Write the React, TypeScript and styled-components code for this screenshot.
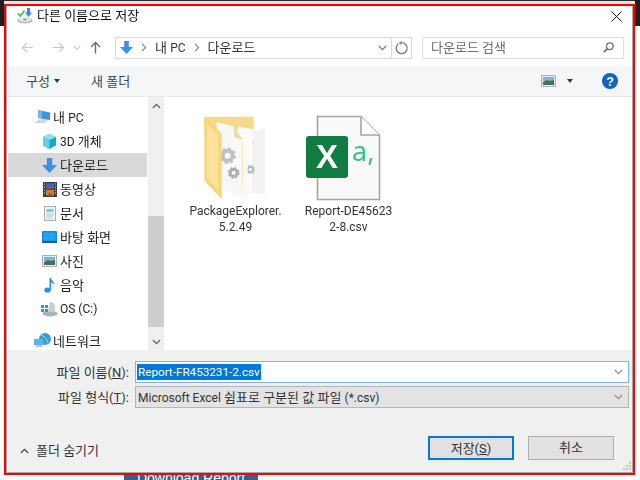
import React from 'react';
import styled, { createGlobalStyle } from 'styled-components';

const GlobalStyle = createGlobalStyle`
  html, body { margin: 0; padding: 0; background: #fff; }
  * { box-sizing: border-box; }
`;

const FONT = `Roboto, "Noto Sans CJK KR", sans-serif`;

const Page = styled.div`
  position: relative;
  width: 640px;
  height: 480px;
  padding: 4px 5px 5px 4px;
  overflow: hidden;
  background: #fff;
  font-family: ${FONT};
  font-size: 13px;
  color: #222;
`;

const BackTop = styled.div`
  position: absolute;
  left: 0;
  right: 0;
  top: 0;
  height: 4px;
  background: linear-gradient(#2a2a2a 0 1px, #e4e4e4 1px);
`;

const BackSide = styled.div<{ $right?: boolean }>`
  position: absolute;
  top: 0;
  height: 26px;
  width: ${(p) => (p.$right ? 5 : 4)}px;
  background: #1f1f1f;
  ${(p) => (p.$right ? 'right: 0;' : 'left: 0;')}
`;

const BackButton = styled.div`
  position: absolute;
  left: 124px;
  top: 466px;
  width: 134px;
  height: 24px;
  background: #2f6196;
  color: #fff;
  font-family: "Liberation Sans", sans-serif;
  font-size: 14px;
  line-height: 24px;
  text-align: center;
`;

const Dialog = styled.div`
  position: relative;
  z-index: 1;
  display: flex;
  flex-direction: column;
  width: 631px;
  height: 471px;
  border: 2px solid #f00;
  background: #fff;
`;

const Inner = styled.div`
  display: flex;
  flex-direction: column;
  height: 100%;
  border: solid #a9a9a9;
  border-width: 0 1px 1px 1px;
  filter: blur(0.4px);
`;

const TitleBar = styled.div`
  display: flex;
  align-items: center;
  height: 27px;
  padding: 0 10px 7px 10px;
  gap: 4px;
  color: #111;
`;

const TitleText = styled.span`
  flex: 1;
  line-height: 16px;
`;

const Text = styled.span`
  margin-bottom: 2px;
`;

const Latin = styled.span`
  font-size: 12px;
`;

const NavBar = styled.div`
  display: flex;
  align-items: center;
  height: 33px;
  padding: 0 8px 4px 14px;
`;

const NavArrows = styled.div`
  display: flex;
  align-items: center;
  width: 94px;
`;

const NavSlot = styled.span<{ $w: number; $end?: boolean }>`
  display: flex;
  justify-content: ${(p) => (p.$end ? 'flex-end' : 'center')};
  width: ${(p) => p.$w}px;
`;

const AddressBox = styled.div`
  display: flex;
  align-items: center;
  width: 297px;
  height: 22px;
  border: 1px solid #d9d9d9;
  color: #333;
`;

const Crumbs = styled.div`
  flex: 1;
  display: flex;
  align-items: center;
  gap: 8px;
  padding-left: 4px;
`;

const AddressEnd = styled.span<{ $w: number; $line?: boolean }>`
  display: flex;
  align-items: center;
  justify-content: center;
  width: ${(p) => p.$w}px;
  height: 100%;
  ${(p) => p.$line && 'border-left: 1px solid #d9d9d9;'}
`;

const SearchBox = styled.div`
  display: flex;
  align-items: center;
  justify-content: space-between;
  width: 202px;
  height: 22px;
  margin-left: 10px;
  padding: 0 9px 0 8px;
  border: 1px solid #dedede;
  color: #6d6d6d;
`;

const ToolBar = styled.div`
  display: flex;
  align-items: center;
  height: 31px;
  padding: 0 14px 0 19px;
  background: #f5f6f7;
  border-bottom: 1px solid #e7e8ea;
  color: #3b4756;
`;

const ToolItem = styled.span<{ $w: number }>`
  display: flex;
  align-items: center;
  gap: 4px;
  width: ${(p) => p.$w}px;
`;

const ToolRight = styled.div`
  margin-left: auto;
  display: flex;
  align-items: center;
`;

const Caret = styled.i`
  display: block;
  width: 0;
  height: 0;
  border: 3.5px solid transparent;
  border-top: 4px solid #2b3a4d;
  border-bottom: 0;
`;

const Main = styled.div`
  flex: 1;
  display: flex;
  min-height: 0;
  overflow: hidden;
`;

const Sidebar = styled.div`
  width: 141px;
  padding-top: 8px;
`;

const TreeRow = styled.div<{ $indent: number; $selected?: boolean; $gapTop?: boolean }>`
  display: flex;
  align-items: center;
  gap: 2px;
  height: 24px;
  margin: ${(p) => (p.$gapTop ? '8px' : '0')} 1px 0;
  padding-left: ${(p) => p.$indent}px;
  background: ${(p) => (p.$selected ? '#d9d9d9' : 'transparent')};
  color: #222;
`;

const IconSlot = styled.span`
  display: flex;
  align-items: center;
  justify-content: center;
  width: 17px;
  height: 17px;
`;

const ScrollBar = styled.div`
  display: flex;
  flex-direction: column;
  width: 16px;
  background: #f0f0f0;
`;

const ScrollBtn = styled.div`
  display: flex;
  align-items: center;
  justify-content: center;
  height: 17px;
`;

const ScrollSpace = styled.div<{ $h: number }>`
  height: ${(p) => p.$h}px;
`;

const ScrollThumb = styled.div`
  height: 111px;
  background: #cdcdcd;
`;

const FileArea = styled.div`
  flex: 1;
  display: flex;
  align-items: flex-start;
  padding: 15px 0 0 15px;
`;

const FileItem = styled.div`
  display: flex;
  flex-direction: column;
  align-items: center;
  width: 113px;
`;

const FileThumb = styled.div<{ $shift?: number }>`
  display: flex;
  align-items: center;
  justify-content: center;
  height: 91px;
  padding-right: ${(p) => p.$shift ?? 0}px;
`;

const FileName = styled.div`
  font-size: 12px;
  line-height: 16px;
  text-align: center;
  color: #333;
`;

const Bottom = styled.div`
  position: relative;
  height: 122px;
  padding: 11px 3px 0 0;
  background: #f0f0f0;
`;

const FieldRow = styled.div`
  display: flex;
  align-items: center;
  height: 22px;
  margin-bottom: 3px;
`;

const FieldLabel = styled.label`
  width: 122px;
  margin: 0 6px 2px 0;
  text-align: right;
  color: #333;
`;

const FileInput = styled.div`
  flex: 1;
  display: flex;
  align-items: center;
  justify-content: space-between;
  height: 22px;
  padding: 0 5px 0 1px;
  border: 1px solid #7db7ea;
  background: #fff;
`;

const Selected = styled.span`
  background: #0078d7;
  color: #fff;
  font-size: 11.7px;
  line-height: 16px;
  padding: 0 1px;
`;

const TypeSelect = styled(FileInput)`
  padding-left: 2px;
  border-color: #b5b5b5;
  background: #e3e3e3;
  color: #333;
`;

const Footer = styled.div`
  display: flex;
  align-items: center;
  margin-top: 26px;
  padding: 0 15px 0 13px;
`;

const HideFolders = styled.div`
  display: flex;
  align-items: center;
  gap: 7px;
  margin-top: 6px;
  margin-right: auto;
  color: #333;
`;

const DlgButton = styled.button<{ $primary?: boolean }>`
  width: 86px;
  height: 24px;
  margin-left: 14px;
  padding: 0 0 2px;
  border: ${(p) => (p.$primary ? '2px solid #0078d7' : '1px solid #adadad')};
  background: #e1e1e1;
  font: inherit;
  color: #333;
`;

const Grip = styled.svg`
  position: absolute;
  right: 0;
  bottom: 0;
`;

const Chevron = ({ up, color = '#777', w = 10 }: { up?: boolean; color?: string; w?: number }) => (
  <svg width={w} height="6" viewBox="0 0 10 6">
    <path d={up ? 'M1 5.2 5 1.2 9 5.2' : 'M1 .8 5 4.8 9 .8'} fill="none" stroke={color} strokeWidth="1.3" />
  </svg>
);

const Arrow = ({ color, dir }: { color: string; dir: 'left' | 'right' | 'up' }) => (
  <svg width="13" height="13" viewBox="0 0 13 13" fill="none" stroke={color} strokeWidth="1.2">
    {dir === 'left' && <path d="M12 6.5H1.5M6 2 1.5 6.5 6 11" />}
    {dir === 'right' && <path d="M1 6.5h10.5M7 2l4.5 4.5L7 11" />}
    {dir === 'up' && <path d="M6.5 12.5V1.5M2 6l4.5-4.5L11 6" strokeWidth="1.4" />}
  </svg>
);

const DownloadIcon = ({ size = 14 }: { size?: number }) => (
  <svg width={size} height={size} viewBox="0 0 14 14">
    <path d="M4.5 0h5v6.5H14L7 14 0 6.5h4.5z" fill="#3f8fe3" />
  </svg>
);

const Crumb = () => (
  <svg width="6" height="9" viewBox="0 0 6 9">
    <path d="M1 .8 4.6 4.5 1 8.2" fill="none" stroke="#888" strokeWidth="1.2" />
  </svg>
);

const SaveIcon = () => (
  <svg width="16" height="16" viewBox="0 0 16 16">
    <ellipse cx="8" cy="12.5" rx="7.5" ry="3" fill="#b9bcbc" />
    <ellipse cx="8" cy="11.5" rx="6" ry="2.2" fill="#e9eaea" />
    <ellipse cx="8" cy="11.5" rx="2" ry=".8" fill="#7c8080" />
    <path d="M1 5.5 3.5 8 7.5 2.5" fill="none" stroke="#5fbb62" strokeWidth="2" />
    <path d="M10 0h3v4.5h2L11.5 9 8 4.5h2z" fill="#2e8fe0" />
  </svg>
);

const PcIcon = () => (
  <svg width="17" height="16" viewBox="0 0 17 16">
    <path d="M0 13.5 6 10h9l-4 4H2z" fill="#d4d6d8" />
    <path d="M4 1 16 3.5V11L4 9z" fill="#3f93d6" />
    <path d="M4 1 8 2v7.5L4 9z" fill="#6cb8e8" />
  </svg>
);

const CubeIcon = () => (
  <svg width="15" height="15" viewBox="0 0 15 15">
    <path d="M7.5 0 14 3v8.5L7.5 15 1 11.5V3z" fill="#1ea5c9" />
    <path d="M7.5 0 14 3 7.5 6 1 3z" fill="#8fe3ef" />
    <path d="M1 3l6.5 3v9L1 11.5z" fill="#5fd2e4" />
  </svg>
);

const FilmIcon = () => (
  <svg width="14" height="15" viewBox="0 0 14 15">
    <rect width="14" height="15" fill="#3b4048" />
    <rect x="3" y="1.5" width="8" height="5.5" fill="#3a6cb0" />
    <rect x="3" y="8" width="8" height="5.5" fill="#c8842c" />
    <path d="M5 7l2-3 2 3zM5 13l2-3 2 3z" fill="#c3462e" />
    <path d="M1 2h1M1 5h1M1 8h1M1 11h1M12 2h1M12 5h1M12 8h1M12 11h1" stroke="#dfe3e6" strokeWidth="1.2" />
  </svg>
);

const DocIcon = () => (
  <svg width="12" height="15" viewBox="0 0 12 15">
    <rect x=".5" y=".5" width="11" height="14" fill="#f0f3f5" stroke="#a8b1b8" />
    <rect x="2.5" y="3" width="7" height="3" fill="#8fc1e3" />
    <path d="M2.5 8h7M2.5 10h7M2.5 12h5" stroke="#a9c6da" />
  </svg>
);

const DesktopIcon = () => (
  <svg width="15" height="12" viewBox="0 0 15 12">
    <rect width="15" height="11" rx="1" fill="#0f8ae0" />
    <rect y="10" width="15" height="2" fill="#1c5f99" />
    <rect x="1.5" y="1.5" width="12" height="8" fill="#22a5ef" />
  </svg>
);

const PhotoIcon = () => (
  <svg width="15" height="12" viewBox="0 0 15 12">
    <rect x=".5" y=".5" width="14" height="11" fill="#e6eaee" stroke="#a9b0b6" />
    <rect x="2" y="2" width="11" height="4" fill="#7fb2d8" />
    <path d="M2 7l4-2 3 1 4-1v5H2z" fill="#4c6d55" />
  </svg>
);

const NoteIcon = () => (
  <svg width="11" height="16" viewBox="0 0 11 16">
    <ellipse cx="3.5" cy="13" rx="3.2" ry="2.6" fill="#2a93dc" />
    <path d="M5.5 1h1.5c.3 3 3.5 3.5 3.5 7-1-1.5-2-2.2-3.3-2.5V13H5.5z" fill="#2a93dc" />
  </svg>
);

const DriveIcon = () => (
  <svg width="17" height="16" viewBox="0 0 17 16">
    <ellipse cx="9" cy="12.5" rx="7.5" ry="3" fill="#aeb2b5" />
    <path d="M9 1c3 0 5 2 5 5v5H7z" fill="#c9cdd0" />
    <path d="M0 4h3v3H0zM4 4h3v3H4zM0 8h3v3H0zM4 8h3v3H4z" fill="#1d9be6" />
  </svg>
);

const NetworkIcon = () => (
  <svg width="17" height="16" viewBox="0 0 17 16">
    <circle cx="11" cy="6" r="6" fill="#3a9bd6" />
    <path d="M7 2c3 1 6 4 7 8" fill="none" stroke="#a8dcf5" />
    <rect x="0" y="6" width="9" height="6" fill="#58b5e6" />
    <path d="M1 14h8l-1-2H2z" fill="#bfc4c8" />
  </svg>
);

const Gear = ({ x, y, r, color }: { x: number; y: number; r: number; color: string }) => (
  <g fill="none" stroke={color}>
    <circle cx={x} cy={y} r={r * 0.62} strokeWidth={r * 0.5} />
    <circle cx={x} cy={y} r={r * 0.9} strokeWidth={r * 0.3} strokeDasharray={`${r * 0.36} ${r * 0.347}`} />
  </g>
);

const FolderIcon = () => (
  <svg width="70" height="87" viewBox="60 40 210 260">
    <path d="M70 48H218V90H70z" fill="#f4d98d" />
    <path d="M172 76 232 90 252 78V280L172 272z" fill="#f3f3f3" />
    <path d="M172 84H212L222 118V272L172 280z" fill="#fbfbfb" />
    <path d="M218 112V268" stroke="#f6e3ae" strokeWidth="3" />
    <Gear x={208} y={206} r={13} color="#b4b9bd" />
    <path d="M106 64 158 76 185 116 200 130V296L122 264z" fill="#f8f8f8" />
    <path d="M158 76 185 116 160 110z" fill="#ecd9a3" />
    <path d="M184 125V262" stroke="#f6e3ae" strokeWidth="3" />
    <Gear x={140} y={165} r={24} color="#bcc1c5" />
    <Gear x={158} y={216} r={17} color="#a9aeb2" />
    <path d="M70 48 122 98V295L70 240z" fill="#f7d57a" />
    <path d="M78 70 112 100V270L78 232z" fill="#fbe39d" />
  </svg>
);

const ExcelIcon = () => (
  <svg width="75" height="86" viewBox="0 0 75 86">
    <path d="M11.5 1.5H55L73.5 20V84.5H11.5z" fill="#f9f9f9" stroke="#a5a5a5" strokeWidth="1.6" />
    <path d="M55 1.5V20H73.5" fill="#fff" stroke="#a5a5a5" strokeWidth="1.6" />
    <rect x="0" y="21" width="42" height="42" rx="3" fill="#107c41" />
    <text x="21" y="53" textAnchor="middle" fontFamily="Liberation Sans, sans-serif" fontWeight="700" fontSize="33" fill="#fff">X</text>
    <text x="46" y="46" fontFamily="Noto Sans, sans-serif" fontSize="27" fill="#33c481">a,</text>
  </svg>
);

const HelpIcon = () => (
  <svg width="16" height="16" viewBox="0 0 16 16">
    <circle cx="8" cy="8" r="8" fill="#0f66c0" />
    <text x="8" y="12.5" textAnchor="middle" fontFamily="Liberation Sans, sans-serif" fontWeight="700" fontSize="12.5" fill="#fff">?</text>
  </svg>
);

const treeItems: { key: string; label: React.ReactNode; indent: number; icon: React.ReactNode; selected?: boolean; gapTop?: boolean }[] = [
  { key: 'pc', label: <>내 <Latin>PC</Latin></>, indent: 26, icon: <PcIcon /> },
  { key: '3d', label: <><Latin>3D</Latin> 개체</>, indent: 33, icon: <CubeIcon /> },
  { key: 'down', label: '다운로드', indent: 33, icon: <DownloadIcon size={15} />, selected: true },
  { key: 'video', label: '동영상', indent: 33, icon: <FilmIcon /> },
  { key: 'docs', label: '문서', indent: 33, icon: <DocIcon /> },
  { key: 'desk', label: '바탕 화면', indent: 33, icon: <DesktopIcon /> },
  { key: 'pics', label: '사진', indent: 33, icon: <PhotoIcon /> },
  { key: 'music', label: '음악', indent: 33, icon: <NoteIcon /> },
  { key: 'os', label: <Latin>OS (C:)</Latin>, indent: 33, icon: <DriveIcon /> },
  { key: 'net', label: '네트워크', indent: 26, icon: <NetworkIcon />, gapTop: true },
];

export default function App() {
  return (
    <Page>
      <GlobalStyle />
      <BackTop />
      <BackSide />
      <BackSide $right />
      <BackButton>Download Report</BackButton>
      <Dialog>
        <Inner>
          <TitleBar>
            <SaveIcon />
            <TitleText>다른 이름으로 저장</TitleText>
            <svg width="11" height="11" viewBox="0 0 11 11">
              <path d="M.5.5l10 10M10.5.5l-10 10" stroke="#111" strokeWidth="1" />
            </svg>
          </TitleBar>
          <NavBar>
            <NavArrows>
              <NavSlot $w={13}><Arrow color="#c8c8c8" dir="left" /></NavSlot>
              <NavSlot $w={18} />
              <NavSlot $w={13}><Arrow color="#c8c8c8" dir="right" /></NavSlot>
              <NavSlot $w={23}><Chevron color="#c8c8c8" w={8} /></NavSlot>
              <NavSlot $w={15}><Arrow color="#6d6d6d" dir="up" /></NavSlot>
            </NavArrows>
            <AddressBox>
              <Crumbs>
                <DownloadIcon size={13} />
                <Crumb />
                <Text>내 <Latin>PC</Latin></Text>
                <Crumb />
                <Text>다운로드</Text>
              </Crumbs>
              <AddressEnd $w={18}><Chevron w={9} /></AddressEnd>
              <AddressEnd $w={20} $line>
                <svg width="14" height="14" viewBox="0 0 14 14">
                  <path d="M3.2 2.8A5.5 5.5 0 1 0 7 1.6" fill="none" stroke="#7d7d7d" strokeWidth="1.4" />
                  <path d="M6.6 0v4L3.6 1.9z" fill="#7d7d7d" />
                </svg>
              </AddressEnd>
            </AddressBox>
            <SearchBox>
              <Text>다운로드 검색</Text>
              <svg width="11" height="11" viewBox="0 0 11 11">
                <circle cx="6.8" cy="4.2" r="3.3" fill="none" stroke="#777" strokeWidth="1.4" />
                <path d="M4.5 6.5.8 10.2" stroke="#777" strokeWidth="1.8" />
              </svg>
            </SearchBox>
          </NavBar>
          <ToolBar>
            <ToolItem $w={65}><Text>구성</Text> <Caret /></ToolItem>
            <ToolItem $w={60}><Text>새 폴더</Text></ToolItem>
            <ToolRight>
              <PhotoIcon />
              <NavSlot $w={28}><Caret /></NavSlot>
              <NavSlot $w={34} $end><HelpIcon /></NavSlot>
            </ToolRight>
          </ToolBar>
          <Main>
            <Sidebar>
              {treeItems.map((item) => (
                <TreeRow key={item.key} $indent={item.indent} $selected={item.selected} $gapTop={item.gapTop}>
                  <IconSlot>{item.icon}</IconSlot>
                  <Text>{item.label}</Text>
                </TreeRow>
              ))}
            </Sidebar>
            <ScrollBar>
              <ScrollBtn><Chevron up color="#606060" w={9} /></ScrollBtn>
              <ScrollSpace $h={102} />
              <ScrollThumb />
              <ScrollSpace $h={6} />
              <ScrollBtn><Chevron color="#606060" w={9} /></ScrollBtn>
            </ScrollBar>
            <FileArea>
              <FileItem>
                <FileThumb><FolderIcon /></FileThumb>
                <FileName>PackageExplorer.<br />5.2.49</FileName>
              </FileItem>
              <FileItem>
                <FileThumb $shift={11}><ExcelIcon /></FileThumb>
                <FileName>Report-DE45623<br />2-8.csv</FileName>
              </FileItem>
            </FileArea>
          </Main>
          <Bottom>
            <FieldRow>
              <FieldLabel>파일 이름(<u>N</u>):</FieldLabel>
              <FileInput>
                <Selected>Report-FR453231-2.csv</Selected>
                <Chevron color="#8a8a8a" w={9} />
              </FileInput>
            </FieldRow>
            <FieldRow>
              <FieldLabel>파일 형식(<u>T</u>):</FieldLabel>
              <TypeSelect>
                <Text><Latin>Microsoft Excel</Latin> 쉼표로 구분된 값 파일 <Latin>(*.csv)</Latin></Text>
                <Chevron color="#8a8a8a" w={9} />
              </TypeSelect>
            </FieldRow>
            <Footer>
              <HideFolders>
                <Chevron up color="#444" w={9} />
                <Text>폴더 숨기기</Text>
              </HideFolders>
              <DlgButton $primary>저장(<u>S</u>)</DlgButton>
              <DlgButton>취소</DlgButton>
            </Footer>
            <Grip width="11" height="11" viewBox="0 0 11 11">
              <path d="M8 1h2v2H8zM5 4h2v2H5zM8 4h2v2H8zM2 7h2v2H2zM5 7h2v2H5zM8 7h2v2H8z" fill="#c4c4c4" />
            </Grip>
          </Bottom>
        </Inner>
      </Dialog>
    </Page>
  );
}
